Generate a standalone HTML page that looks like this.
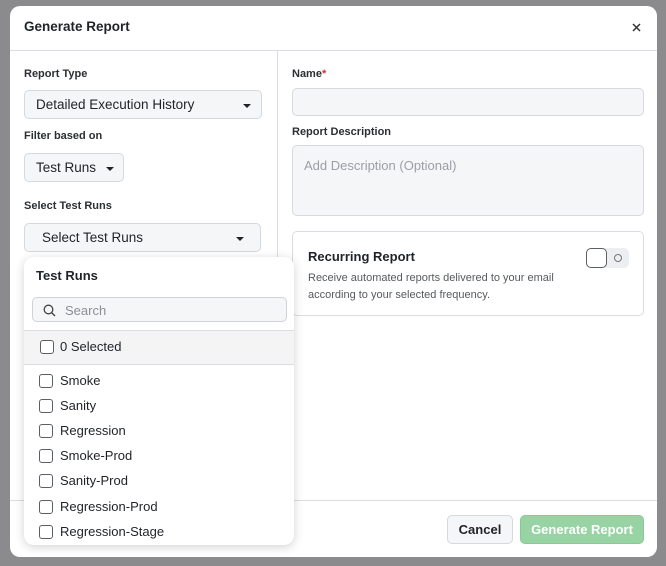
<!DOCTYPE html><html><head><style>
*{box-sizing:border-box;margin:0;padding:0}
body{width:666px;height:566px;background:#8b8b8d;font-family:"Liberation Sans",sans-serif;position:relative;overflow:hidden;color:#1f2328}
.modal{position:absolute;left:10px;top:6px;width:647px;height:551px;background:#fff;border-radius:10px;overflow:hidden}
.abs{position:absolute}
.lbl{font-size:11px;font-weight:bold;color:#2b2f33}
.sel{position:absolute;background:#f5f6f8;border:1px solid #d5d8dc;border-radius:5px;font-size:13.5px;color:#1f2328}
.caret{position:absolute;width:0;height:0;border-left:4px solid transparent;border-right:4px solid transparent;border-top:4px solid #1f2328}
.cb{position:absolute;width:14px;height:14px;border:1px solid #5a5f66;border-radius:3px;background:#fff}
.it{position:absolute;left:36px;font-size:13px;color:#1f2328}
</style></head><body>
<div class="modal">
 <div class="abs" style="left:14px;top:13px;font-size:13.5px;font-weight:bold">Generate Report</div>
 <svg class="abs" style="left:622px;top:17px" width="9" height="9" viewBox="0 0 9 9"><path d="M1 1L8 8M8 1L1 8" stroke="#333" stroke-width="1.5"/></svg>
 <div class="abs" style="left:0;top:44px;width:647px;height:1px;background:#dadde1"></div>
 <div class="abs" style="left:267px;top:45px;width:1px;height:449px;background:#dadde1"></div>
 <div class="abs" style="left:0;top:494px;width:647px;height:1px;background:#dadde1"></div>
 <div class="abs lbl" style="left:14px;top:62px">Report Type</div>
 <div class="sel" style="left:14px;top:84px;width:238px;height:29px"><span class="abs" style="left:11px;top:6px">Detailed Execution History</span><div class="caret" style="left:218px;top:13px"></div></div>
 <div class="abs lbl" style="left:14px;top:124px">Filter based on</div>
 <div class="sel" style="left:14px;top:147px;width:100px;height:29px"><span class="abs" style="left:11px;top:6px">Test Runs</span><div class="caret" style="left:81px;top:13px"></div></div>
 <div class="abs lbl" style="left:14px;top:194px">Select Test Runs</div>
 <div class="sel" style="left:14px;top:217px;width:237px;height:29px"><span class="abs" style="left:17px;top:6px">Select Test Runs</span><div class="caret" style="left:211px;top:13px"></div></div>
 <div class="abs lbl" style="left:282px;top:62px">Name<span style="color:#d32f2f">*</span></div>
 <div class="abs" style="left:282px;top:82px;width:352px;height:28px;background:#f5f6f8;border:1px solid #d5d8dc;border-radius:5px"></div>
 <div class="abs lbl" style="left:282px;top:120px">Report Description</div>
 <div class="abs" style="left:282px;top:139px;width:352px;height:71px;background:#f5f6f8;border:1px solid #d5d8dc;border-radius:5px"><span class="abs" style="left:11px;top:12px;font-size:13px;color:#9a9fa6">Add Description (Optional)</span></div>
 <div class="abs" style="left:282px;top:225px;width:352px;height:85px;border:1px solid #dadde1;border-radius:5px">
  <div class="abs" style="left:15px;top:17px;font-size:13px;font-weight:bold">Recurring Report</div>
  <div class="abs" style="left:15px;top:38px;font-size:11px;color:#555a60;line-height:17px">Receive automated reports delivered to your email<br>according to your selected frequency.</div>
  <div class="abs" style="left:293px;top:16px;width:43px;height:20px;background:#eceef1;border-radius:5px"></div>
  <div class="abs" style="left:293px;top:16px;width:21px;height:20px;background:#fff;border:1px solid #5a5f66;border-radius:5px"></div>
  <div class="abs" style="left:321px;top:22px;width:8px;height:8px;border:1px solid #777;border-radius:50%"></div>
 </div>
 <div class="abs" style="left:437px;top:509px;width:66px;height:29px;background:#f5f6f8;border:1px solid #d5d8dc;border-radius:5px;font-size:13px;font-weight:bold;text-align:center;line-height:27px">Cancel</div>
 <div class="abs" style="left:510px;top:509px;width:124px;height:29px;background:#98d3a3;border:1px solid #8bc896;border-radius:5px;font-size:13px;font-weight:bold;color:#fff;text-align:center;line-height:27px">Generate Report</div>
</div>
<div class="abs" style="left:24px;top:257px;width:270px;height:288px;background:#fff;border-radius:10px;box-shadow:0 2px 10px rgba(0,0,0,0.18);overflow:hidden">
 <div class="abs" style="left:12px;top:11px;font-size:13px;font-weight:bold">Test Runs</div>
 <div class="abs" style="left:8px;top:40px;width:255px;height:25px;background:#f5f6f8;border:1px solid #cfd3d8;border-radius:5px">
  <svg class="abs" style="left:10px;top:6px" width="13" height="13" viewBox="0 0 13 13"><circle cx="5.5" cy="5.5" r="4.3" fill="none" stroke="#444" stroke-width="1.3"/><path d="M8.7 8.7L12 12" stroke="#444" stroke-width="1.4"/></svg>
  <span class="abs" style="left:32px;top:5px;font-size:13px;color:#8a8f96">Search</span>
 </div>
 <div class="abs" style="left:0;top:73px;width:270px;height:35px;background:#f4f4f5;border-top:1px solid #dadde1;border-bottom:1px solid #dadde1"></div>
 <div class="cb" style="left:16px;top:83px"></div><div class="it" style="top:82px">0 Selected</div>
 <div class="cb" style="left:15px;top:117px"></div><div class="it" style="top:116px">Smoke</div>
 <div class="cb" style="left:15px;top:142px"></div><div class="it" style="top:141px">Sanity</div>
 <div class="cb" style="left:15px;top:167px"></div><div class="it" style="top:166px">Regression</div>
 <div class="cb" style="left:15px;top:192px"></div><div class="it" style="top:191px">Smoke-Prod</div>
 <div class="cb" style="left:15px;top:217px"></div><div class="it" style="top:216px">Sanity-Prod</div>
 <div class="cb" style="left:15px;top:243px"></div><div class="it" style="top:242px">Regression-Prod</div>
 <div class="cb" style="left:15px;top:268px"></div><div class="it" style="top:267px">Regression-Stage</div>
</div>
</body></html>
